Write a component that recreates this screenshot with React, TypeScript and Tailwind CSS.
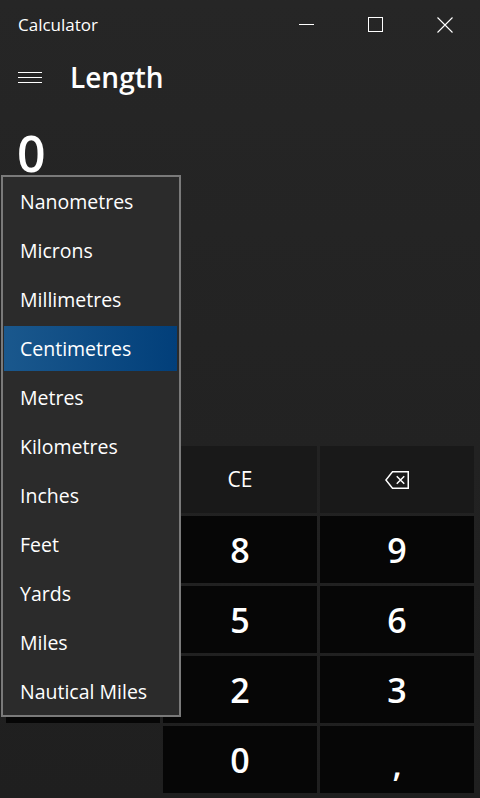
import React from 'react';

const font = { fontFamily: '"Segoe UI", "Open Sans", "Noto Sans", sans-serif' };

const units = [
  'Nanometres',
  'Microns',
  'Millimetres',
  'Centimetres',
  'Metres',
  'Kilometres',
  'Inches',
  'Feet',
  'Yards',
  'Miles',
  'Nautical Miles',
];

type Key = { label?: string; kind: 'blank' | 'fn' | 'digit' | 'back' };

// first column keys (7, 4, 1) sit under the open list, so they carry no label here
const keys: Key[] = [
  { kind: 'blank' },
  { label: 'CE', kind: 'fn' },
  { kind: 'back' },
  { kind: 'digit' },
  { label: '8', kind: 'digit' },
  { label: '9', kind: 'digit' },
  { kind: 'digit' },
  { label: '5', kind: 'digit' },
  { label: '6', kind: 'digit' },
  { kind: 'digit' },
  { label: '2', kind: 'digit' },
  { label: '3', kind: 'digit' },
  { kind: 'blank' },
  { label: '0', kind: 'digit' },
  { label: ',', kind: 'digit' },
];

const BackspaceIcon = () => (
  <svg width="24" height="18" viewBox="0 0 24 18" fill="none" stroke="white" strokeWidth="1.5">
    <path d="M7.5 0.75 H23.25 V17.25 H7.5 L0.9 9 Z" strokeLinejoin="miter" />
    <path d="M11.75 5.25 L19.25 12.75 M19.25 5.25 L11.75 12.75" />
  </svg>
);

export default function App() {
  return (
    <div
      className="relative flex flex-col w-[480px] h-[798px] overflow-hidden text-white bg-gradient-to-b from-[#262626] to-[#1f1f1f]"
      style={font}
    >
      {/* Title bar */}
      <div className="flex items-center h-[49px] shrink-0">
        <span className="pl-[18px] text-[17px] leading-none flex-1">Calculator</span>
        <div className="flex h-full">
          <button className="w-[69px] h-full flex items-center justify-center">
            <span className="block w-[15px] h-px bg-white" />
          </button>
          <button className="w-[69px] h-full flex items-center justify-center">
            <span className="block w-[15px] h-[15px] border border-white" />
          </button>
          <button className="w-[69px] h-full flex items-center justify-center mr-px">
            <svg width="16" height="16" viewBox="0 0 16 16" stroke="white" strokeWidth="1.1">
              <path d="M0.5 0.5 L15.5 15.5 M15.5 0.5 L0.5 15.5" />
            </svg>
          </button>
        </div>
      </div>

      {/* Header */}
      <div className="flex items-center h-[56px] shrink-0">
        <div className="w-[70px] pl-[18px] flex flex-col gap-[4px]">
          <span className="block w-[24px] h-px bg-white" />
          <span className="block w-[24px] h-px bg-white" />
          <span className="block w-[24px] h-px bg-white" />
        </div>
        <h1 className="text-[28px] font-semibold leading-none">Length</h1>
      </div>

      {/* Value */}
      <div className="pl-[17px] mt-[23px] text-[50px] font-semibold leading-none">0</div>

      {/* Keypad */}
      <div className="mt-auto grid grid-cols-3 grid-rows-5 gap-[3px] px-[6px] pb-[5px] h-[352px]">
        {keys.map((k, i) => {
          if (k.kind === 'blank') return <div key={i} />;
          const bg = k.kind === 'digit' ? 'bg-[#060606]' : 'bg-[#191919]';
          const text =
            k.kind === 'digit' ? 'text-[34px] font-semibold' : 'text-[21px] font-normal';
          return (
            <button key={i} className={`${bg} ${text} flex items-center justify-center leading-none`}>
              {k.kind === 'back' ? (
                <BackspaceIcon />
              ) : k.label === ',' ? (
                <span className="pt-[8px]">,</span>
              ) : (
                k.label
              )}
            </button>
          );
        })}
      </div>

      {/* Dropdown */}
      <div className="absolute left-[1px] top-[175px] w-[180px] h-[542px] border-2 border-[#7a7a7a] bg-[#2b2b2b] pl-px pr-[2px] pt-[2px] pb-px flex flex-col gap-[4px]">
        {units.map((u) => (
          <div
            key={u}
            className={`h-[45px] shrink-0 flex items-center pl-[16px] text-[19.5px] leading-none ${
              u === 'Centimetres' ? 'bg-gradient-to-r from-[#1a588d] to-[#023f7a]' : ''
            }`}
          >
            {u}
          </div>
        ))}
      </div>
    </div>
  );
}
